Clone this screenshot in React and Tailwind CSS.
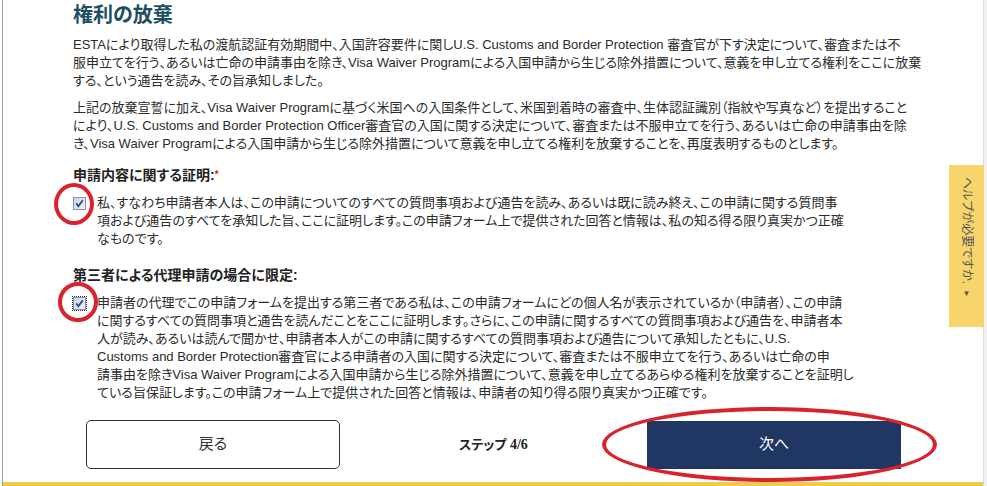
// ESTA waiver / certification step
const para1 = [
  'ESTAにより取得した私の渡航認証有効期間中、入国許容要件に関しU.S. Customs and Border Protection 審査官が下す決定について、審査または不',
  '服申立てを行う、あるいは亡命の申請事由を除き、Visa Waiver Programによる入国申請から生じる除外措置について、意義を申し立てる権利をここに放棄',
  'する、という通告を読み、その旨承知しました。',
];

const para2 = [
  '上記の放棄宣誓に加え、Visa Waiver Programに基づく米国への入国条件として、米国到着時の審査中、生体認証識別（指紋や写真など）を提出すること',
  'により、U.S. Customs and Border Protection Officer審査官の入国に関する決定について、審査または不服申立てを行う、あるいは亡命の申請事由を除',
  'き、Visa Waiver Programによる入国申請から生じる除外措置について意義を申し立てる権利を放棄することを、再度表明するものとします。',
];

const cert1 = [
  '私、すなわち申請者本人は、この申請についてのすべての質問事項および通告を読み、あるいは既に読み終え、この申請に関する質問事',
  '項および通告のすべてを承知した旨、ここに証明します。この申請フォーム上で提供された回答と情報は、私の知る得る限り真実かつ正確',
  'なものです。',
];

const cert2 = [
  '申請者の代理でこの申請フォームを提出する第三者である私は、この申請フォームにどの個人名が表示されているか（申請者）、この申請',
  'に関するすべての質問事項と通告を読んだことをここに証明します。さらに、この申請に関するすべての質問事項および通告を、申請者本',
  '人が読み、あるいは読んで聞かせ、申請者本人がこの申請に関するすべての質問事項および通告について承知したともに、U.S.',
  'Customs and Border Protection審査官による申請者の入国に関する決定について、審査または不服申立てを行う、あるいは亡命の申',
  '請事由を除きVisa Waiver Programによる入国申請から生じる除外措置について、意義を申し立てるあらゆる権利を放棄することを証明し',
  'ている旨保証します。この申請フォーム上で提供された回答と情報は、申請者の知り得る限り真実かつ正確です。',
];

function Lines({ lines }) {
  return (
    <div className="text-[13px] leading-[18px] text-[#2b2b2b]">
      {lines.map((l, i) => (
        <div key={i} className="whitespace-nowrap">{l}</div>
      ))}
    </div>
  );
}

function Checkbox({ dotted }) {
  return (
    <div className={`w-[13px] h-[13px] ${dotted ? 'outline outline-1 outline-dotted outline-[#333] outline-offset-0' : ''}`}>
      <svg width="13" height="13" viewBox="0 0 13 13">
        <defs>
          <linearGradient id="cbg" x1="0" y1="0" x2="1" y2="1">
            <stop offset="0" stopColor="#c9d2dc" />
            <stop offset="1" stopColor="#f2f5f8" />
          </linearGradient>
        </defs>
        <rect x="0.5" y="0.5" width="12" height="12" fill="url(#cbg)" stroke="#8796aa" />
        <path d="M3.3 6.4 L5.4 9.2 L9.8 3.2" fill="none" stroke="#2c4a8c" strokeWidth="1.8" />
      </svg>
    </div>
  );
}

function CertRow({ lines, circle, dotted }) {
  return (
    <div className="flex">
      <div className="relative w-[24px] shrink-0 pt-[3px]">
        <Checkbox dotted={dotted} />
        <div className={`absolute ${circle} rounded-[50%] border-[4px] border-[#d8222c]`} />
      </div>
      <Lines lines={lines} />
    </div>
  );
}

export default function App() {
  return (
    <div
      className="relative w-[987px] h-[486px] overflow-hidden bg-white flex [font-feature-settings:'palt']"
      style={{ fontFamily: '"Liberation Sans", "Noto Sans CJK JP", sans-serif' }}
    >
      <div className="w-[2px] shrink-0" />
      <div className="flex-1 flex flex-col border-l border-[#9a9a9a]">
        <div className="flex-1 pl-[70px] pt-[3px]">
          <h1 className="text-[20px] leading-[24px] font-bold text-[#1e4f61]">権利の放棄</h1>
          <div className="mt-[9px]">
            <Lines lines={para1} />
          </div>
          <div className="mt-[9px]">
            <Lines lines={para2} />
          </div>

          <div className="mt-[13px] text-[14px] leading-[18px] font-bold text-[#222]">
            申請内容に関する証明:<span className="text-[#d0202a] text-[10px] align-top">*</span>
          </div>
          <div className="mt-[10px]">
            <CertRow lines={cert1} circle="-left-[19px] -top-[11px] w-[40px] h-[42px]" />
          </div>

          <div className="mt-[18px] text-[14px] leading-[18px] font-bold text-[#222]">
            第三者による代理申請の場合に限定:
          </div>
          <div className="mt-[10px]">
            <CertRow lines={cert2} circle="-left-[15px] -top-[12px] w-[40px] h-[40px]" dotted />
          </div>

          <div className="mt-[18px] ml-[13px] w-[815px] flex items-center justify-between">
            <button className="w-[254px] h-[49px] rounded-[5px] border border-[#333] bg-white text-[15px] text-[#333]">
              戻る
            </button>
            <div className="text-[13px] font-bold text-[#222]">
              ステップ <span className="font-['Liberation_Serif',serif] text-[14px]">4/6</span>
            </div>
            <div className="relative">
              <button className="w-[254px] h-[48px] bg-[#1f3762] text-white text-[15px]">次へ</button>
              <div className="absolute -left-[45px] -top-[14px] w-[335px] h-[75px] rounded-[50%] border-[4px] border-[#d8222c] pointer-events-none" />
            </div>
          </div>
        </div>
        <div className="h-[4px] bg-[#f0c94f]" />
      </div>
      <div className="w-[4px] shrink-0 bg-[#f1f1f1] border-l border-[#dcdcdc]" />

      {/* help tab */}
      <div className="absolute right-[3px] top-[165px] w-[35px] h-[162px] bg-[#f8d56b] flex flex-col items-center pt-[12px]">
        <div className="text-[12px] leading-[14px] text-[#555] [writing-mode:vertical-rl] [text-orientation:sideways]">
          ヘルプが必要ですか.
        </div>
        <div className="mt-[4px] text-[8px] text-[#555]">▼</div>
      </div>
    </div>
  );
}
